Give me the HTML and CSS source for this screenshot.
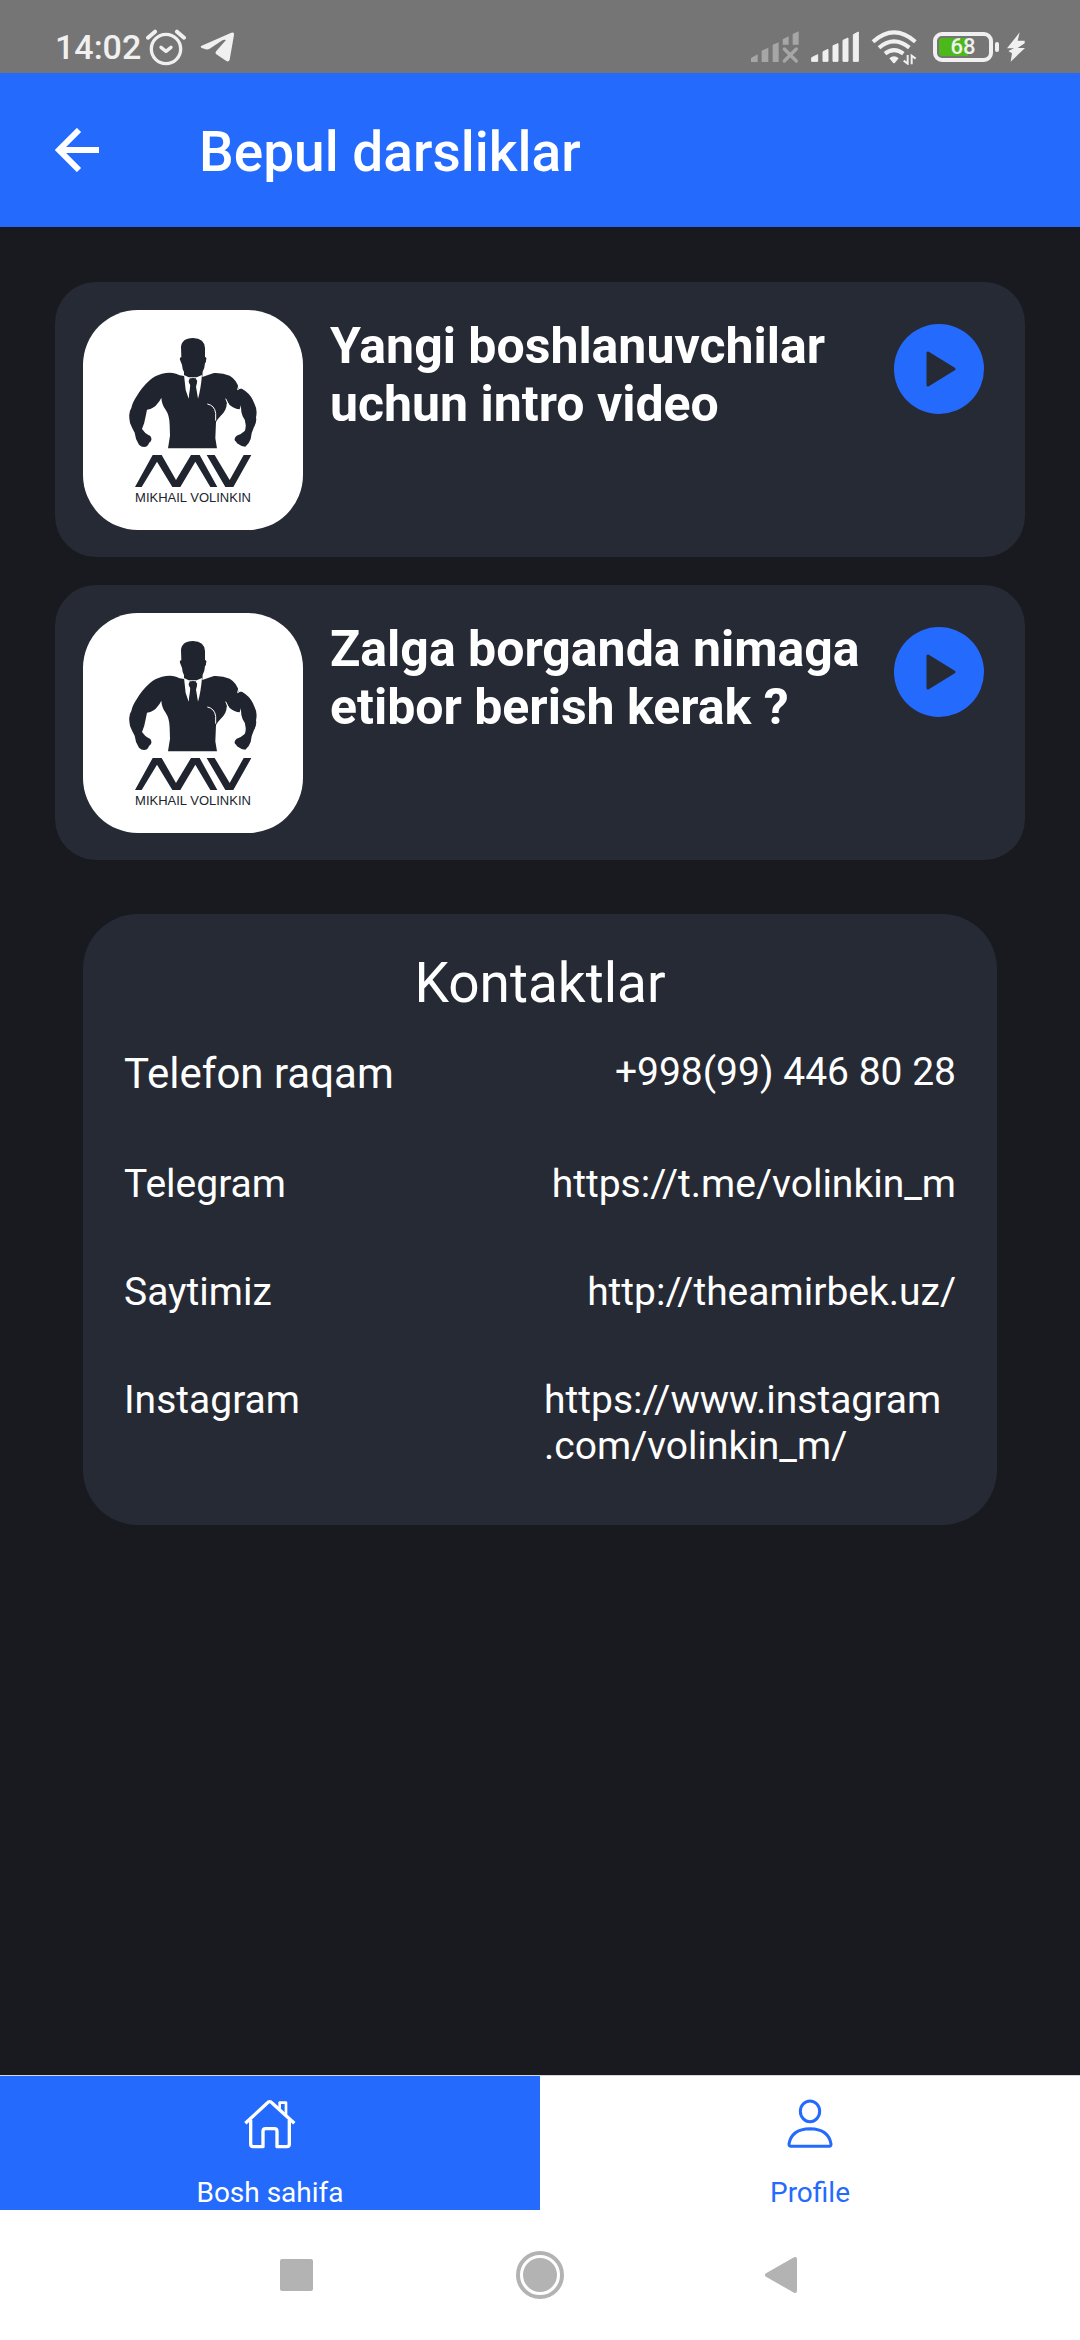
FILE: index.html
```html
<!DOCTYPE html>
<html lang="uz">
<head>
    <meta charset="UTF-8">
    <meta name="viewport" content="width=device-width, initial-scale=1.0">
    <title>Bepul darsliklar</title>
    <link rel="stylesheet" href="styles.css">
</head>
<body>
    <div class="status">
        <span class="time">14:02</span>
        <svg class="alarm" width="40" height="38" viewBox="440 78 120 114" fill="none" stroke="#f0f0f0" stroke-linecap="round">
            <circle cx="500" cy="141" r="44" stroke-width="10"/>
            <path d="M446 107L467 89M533 89L554 107" stroke-width="12"/>
            <path d="M485 136L500 148L515 136" stroke-width="10" stroke-linejoin="round"/>
        </svg>
        <svg class="telegram" width="34" height="32" viewBox="603 94 102 96" fill="#f0f0f0">
            <path d="M608 138L697 99Q706 96 705 106L692 180Q689 188 682 184L651 163Q648 158 652 154L681 121Q675 118 668 123L632 147Q627 150 620 149L608 145Q602 141 608 138Z"/>
        </svg>
        <div class="indicators">
            <svg width="48" height="34" viewBox="87 90 144 102" fill="#a6a6a6">
                <path d="M87 186V174L107 163V186ZM119 186V152L139 143V186ZM152 186V134L170 127V186ZM182 134V118L200 109V134ZM212 134V102L230 94V134Z"/>
                <path d="M187 147L223 183M223 147L187 183" stroke="#a6a6a6" stroke-width="10" stroke-linecap="round"/>
            </svg>
            <svg width="48" height="34" viewBox="267 90 144 102" fill="#f0f0f0" stroke="#f0f0f0" stroke-width="3" stroke-linejoin="round">
                <path d="M269 184V173L287 164V184ZM303 184V155L318 148V184ZM333 184V137L348 131V184ZM363 184V121L378 114V184ZM394 184V104L409 96V184Z"/>
            </svg>
            <svg width="46" height="36" viewBox="449 86 138 108" fill="none" stroke="#f0f0f0">
                <path d="M455 124Q518 68 582 124" stroke-width="12"/>
                <path d="M473 142Q518 104 564 142" stroke-width="12"/>
                <path d="M491 160Q518 139 546 160" stroke-width="12"/>
                <path d="M504 174Q518 162 532 174L521 187Q518 190 515 187Z" fill="#f0f0f0" stroke="none"/>
                <path d="M559 164V190L547 181M571 192V166L583 175" stroke-width="6"/>
            </svg>
            <div class="battery">
                <span class="level">68</span>
            </div>
            <svg class="bolt" width="18" height="30" viewBox="861 94 54 90" fill="#f0f0f0">
                <path d="M899 95L861 143H882L865 151L876 158L872 183L915 142H893L914 128V120H893Z"/>
            </svg>
        </div>
    </div>

    <header class="header">
        <button class="back" type="button" aria-label="Orqaga">
            <svg width="44" height="44" viewBox="0 0 44 44" fill="none" stroke="#fff" stroke-width="6">
                <path d="M44 22H4M24 2L4 22L24 42"/>
            </svg>
        </button>
        <h1>Bepul darsliklar</h1>
    </header>

    <!-- Logo shared by the lesson cards -->
    <svg class="symbols" width="0" height="0" aria-hidden="true">
        <symbol id="logo" viewBox="39 60 660 540">
            <g fill="#20242e">
                <path d="M369 144C345 144 334 155 333 172L334 202Q328 202 330 209L334 220L336 224Q337 238 342 246V258Q328 256 318 251Q300 246 276 251Q254 257 240 270Q215 292 200 319Q187 338 184 354Q176 366 178 382Q177 398 187 415L194 428Q196 448 207 464Q217 474 231 469Q237 462 237 459Q246 454 244 446Q244 438 235 435Q225 430 216 417Q224 399 227 379L231 359Q253 355 262 341Q269 334 274 323Q275 342 286 358Q299 377 299 405L300 437L294 475H441L436 445L438 396Q444 386 451 379Q470 362 470 343Q472 338 468 331L479 345Q493 357 509 358L513 345Q512 366 518 379Q527 390 527 404Q528 413 524 423Q515 432 500 437Q491 445 495 452Q500 455 501 460Q512 469 526 470Q538 460 542 447Q543 430 552 411Q561 397 558 382Q563 360 554 343Q545 317 526 303Q516 294 506 295Q501 270 479 257Q459 248 432 249Q418 254 397 261L398 245Q404 236 405 220Q409 216 408 210Q412 205 405 200V174Q404 146 369 144Z"/>
                <path d="M195 591L248 495H275L318 570L363 495H389L442 591H421L376 515L331 591H307L261 515L215 591Z"/>
                <path d="M410 495H434L479 570L521 495H544L490 591H466Z"/>
            </g>
            <path d="M342 255L356 262H380L396 255Q392 300 384 326L378 290L381 278L378 265H359L356 275L361 286L356 326L347 300Z" fill="#fff"/>
            <path d="M356 272L369 263L382 272L376 288L382 326L369 350L356 334L362 288Z" fill="#20242e"/>
            <path d="M412 342Q434 346 437 370V392M506 287L503 299L513 293M467 326L475 342" fill="none" stroke="#fff" stroke-width="3"/>
        </symbol>
    </svg>

    <main class="content">
        <div class="lesson">
            <div class="logo">
                <svg width="220" height="180"><use href="#logo"/></svg>
                <p>MIKHAIL VOLINKIN</p>
            </div>
            <h2>Yangi boshlanuvchilar uchun intro video</h2>
            <button class="play" type="button" aria-label="Videoni boshlash">
                <svg width="30" height="36" viewBox="0 0 30 36"><path d="M2 2V34L28 18Z"/></svg>
            </button>
        </div>
        <div class="lesson">
            <div class="logo">
                <svg width="220" height="180"><use href="#logo"/></svg>
                <p>MIKHAIL VOLINKIN</p>
            </div>
            <h2>Zalga borganda nimaga etibor berish kerak ?</h2>
            <button class="play" type="button" aria-label="Videoni boshlash">
                <svg width="30" height="36" viewBox="0 0 30 36"><path d="M2 2V34L28 18Z"/></svg>
            </button>
        </div>

        <section class="contacts">
            <h2>Kontaktlar</h2>
            <dl>
                <div class="row phone">
                    <dt>Telefon raqam</dt>
                    <dd><a href="tel:+998994468028">+998(99) 446 80 28</a></dd>
                </div>
                <div class="row">
                    <dt>Telegram</dt>
                    <dd><a href="https://t.me/volinkin_m">https://t.me/volinkin_m</a></dd>
                </div>
                <div class="row">
                    <dt>Saytimiz</dt>
                    <dd><a href="http://theamirbek.uz/">http://theamirbek.uz/</a></dd>
                </div>
                <div class="row wrap">
                    <dt>Instagram</dt>
                    <dd><a href="https://www.instagram.com/volinkin_m/">https://www.instagram<wbr>.com/volinkin_m/</a></dd>
                </div>
            </dl>
        </section>
    </main>

    <nav class="tabs">
        <a class="tab active" href="#home">
            <svg width="52" height="50" viewBox="194 116 156 150" fill="none" stroke="currentColor" stroke-width="10" stroke-linejoin="round">
                <path d="M198 189L263 129Q271 119 279 129L345 189"/>
                <path d="M214 178V251Q214 259 222 259H251V213Q251 205 259 205H285Q293 205 293 213V259H322Q330 259 330 251V178"/>
                <path d="M301 145V127H320V163" stroke-width="8"/>
            </svg>
            <span>Bosh sahifa</span>
        </a>
        <a class="tab" href="#profile">
            <svg width="52" height="50" viewBox="253 116 156 150" fill="none" stroke="currentColor" stroke-width="9">
                <ellipse cx="331" cy="153" rx="29" ry="31"/>
                <path d="M274 258Q268 258 268 251Q275 206 331 205Q387 206 394 251Q394 258 389 258Z"/>
            </svg>
            <span>Profile</span>
        </a>
    </nav>

    <div class="system">
        <button type="button" aria-label="Ilovalar">
            <svg width="50" height="50" viewBox="0 0 50 50"><rect x="9" y="9" width="33" height="32" rx="2"/></svg>
        </button>
        <button type="button" aria-label="Bosh ekran">
            <svg width="50" height="50" viewBox="0 0 50 50">
                <circle cx="25" cy="25" r="17"/>
                <circle cx="25" cy="25" r="22" fill="none" stroke="#b3b3b3" stroke-width="4"/>
            </svg>
        </button>
        <button type="button" aria-label="Orqaga">
            <svg width="50" height="50" viewBox="0 0 50 50"><path d="M8 25L36 9V41Z" stroke="#b3b3b3" stroke-width="4" stroke-linejoin="round"/></svg>
        </button>
    </div>
</body>
</html>
```
FILE: styles.css
```css
* {
    margin: 0;
    padding: 0;
    box-sizing: border-box;
}
body {
    min-height: 100vh;
    display: flex;
    flex-direction: column;
    background-color: #181a20;
    color: white;
    font-family: Roboto, "Liberation Sans", sans-serif;
}
svg {
    display: block;
    flex: none;
}
a {
    color: inherit;
    text-decoration: none;
}
button {
    border: none;
    background: none;
    cursor: pointer;
}
.symbols {
    position: absolute;
}

/* status bar */
.status {
    height: 73px;
    padding: 20px 55px 0 55px;
    display: flex;
    align-items: center;
    background-color: #757575;
    color: #f0f0f0;
}
.time {
    font-size: 34px;
    line-height: 40px;
    font-weight: 500;
}
.alarm {
    margin-left: 5px;
}
.telegram {
    margin-left: 14px;
}
.indicators {
    margin-left: auto;
    display: flex;
    align-items: center;
    gap: 12px;
}
.battery {
    position: relative;
    width: 60px;
    height: 30px;
    margin-left: 4px;
    border: 4px solid #f0f0f0;
    border-radius: 9px;
    background: linear-gradient(to right, #4db81a 60%, transparent 60%) content-box;
    padding: 2px;
}
.battery::after {
    content: "";
    position: absolute;
    right: -10px;
    top: 6px;
    width: 4px;
    height: 10px;
    border-radius: 2px;
    background-color: #f0f0f0;
}
.level {
    display: block;
    text-align: center;
    font-size: 22px;
    line-height: 18px;
    font-weight: 500;
}
.bolt {
    margin-left: 2px;
}

/* title bar */
.header {
    height: 154px;
    padding: 0 55px;
    display: flex;
    align-items: center;
    gap: 100px;
    background-color: #246bfd;
}
.header h1 {
    padding-top: 4px;
    font-size: 55px;
    line-height: 64px;
    font-weight: 500;
}

/* lessons */
.content {
    flex: 1;
    padding: 55px;
}
.lesson {
    padding: 28px 28px 27px;
    margin-bottom: 28px;
    display: flex;
    align-items: flex-start;
    gap: 27px;
    background-color: #262a34;
    border-radius: 41px;
}
.logo {
    width: 220px;
    height: 220px;
    border-radius: 55px;
    background-color: white;
}
.logo p {
    color: #20242e;
    font-family: "Liberation Sans", sans-serif;
    font-size: 13px;
    line-height: 16px;
    text-align: center;
}
.lesson h2 {
    flex: 1;
    margin-top: 7px;
    font-size: 50px;
    line-height: 58px;
    font-weight: 700;
}
.play {
    width: 90px;
    height: 90px;
    margin: 14px 13px 0 0;
    display: flex;
    justify-content: center;
    align-items: center;
    border-radius: 50%;
    background-color: #246bfd;
}
.play svg {
    margin-left: 4px;
    fill: #262a34;
    stroke: #262a34;
    stroke-width: 3;
    stroke-linejoin: round;
}

/* contacts */
.contacts {
    margin: 54px 28px 0;
    padding: 37px 41px 56px;
    background-color: #262a34;
    border-radius: 55px;
}
.contacts h2 {
    margin-bottom: 34px;
    font-size: 55px;
    line-height: 64px;
    font-weight: 400;
    text-align: center;
}
.row {
    margin-bottom: 62px;
    display: flex;
    justify-content: space-between;
    font-size: 39px;
    line-height: 46px;
}
.row:last-child {
    margin-bottom: 0;
}
.phone dt {
    font-size: 42px;
    line-height: 50px;
}
.wrap dd {
    width: 412px;
}

/* bottom tabs */
.tabs {
    display: flex;
    border-top: 1px solid #d8d8d8;
    background-color: white;
}
.tab {
    flex: 1;
    height: 134px;
    padding-top: 23px;
    display: flex;
    flex-direction: column;
    align-items: center;
    gap: 28px;
    color: #246bfd;
    font-size: 28px;
    line-height: 32px;
}
.tab.active {
    background-color: #246bfd;
    color: white;
}

/* system buttons */
.system {
    height: 130px;
    display: flex;
    justify-content: center;
    align-items: center;
    gap: 194px;
    background-color: white;
}
.system svg {
    fill: #b3b3b3;
}
```
